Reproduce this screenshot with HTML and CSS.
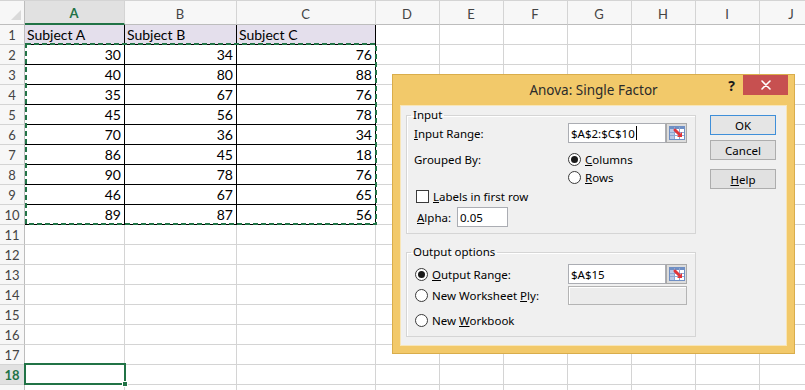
FILE: index.html
```html
<!DOCTYPE html>
<html lang="en">
  <head>
    <meta charset="UTF-8" />
    <meta name="viewport" content="width=device-width, initial-scale=1.0" />
    <title>Anova: Single Factor</title>
    <link rel="stylesheet" href="styles.css">
  </head>
  <body>
    <div class="workbook">
      <div class="grid">
        <div class="cell corner"></div>
        <div class="cell col-head active">A</div><div class="cell col-head">B</div><div class="cell col-head">C</div><div class="cell col-head">D</div><div class="cell col-head">E</div><div class="cell col-head">F</div><div class="cell col-head">G</div><div class="cell col-head">H</div><div class="cell col-head">I</div><div class="cell col-head">J</div>

        <div class="cell row-head">1</div>
        <div class="cell boxed title-row">Subject A</div><div class="cell boxed title-row">Subject B</div><div class="cell boxed title-row">Subject C</div>
        <div class="cell"></div><div class="cell"></div><div class="cell"></div><div class="cell"></div><div class="cell"></div><div class="cell"></div><div class="cell"></div>

        <div class="cell row-head">2</div>
        <div class="cell boxed num">30</div><div class="cell boxed num">34</div><div class="cell boxed num">76</div>
        <div class="cell"></div><div class="cell"></div><div class="cell"></div><div class="cell"></div><div class="cell"></div><div class="cell"></div><div class="cell"></div>

        <div class="cell row-head">3</div>
        <div class="cell boxed num">40</div><div class="cell boxed num">80</div><div class="cell boxed num">88</div>
        <div class="cell"></div><div class="cell"></div><div class="cell"></div><div class="cell"></div><div class="cell"></div><div class="cell"></div><div class="cell"></div>

        <div class="cell row-head">4</div>
        <div class="cell boxed num">35</div><div class="cell boxed num">67</div><div class="cell boxed num">76</div>
        <div class="cell"></div><div class="cell"></div><div class="cell"></div><div class="cell"></div><div class="cell"></div><div class="cell"></div><div class="cell"></div>

        <div class="cell row-head">5</div>
        <div class="cell boxed num">45</div><div class="cell boxed num">56</div><div class="cell boxed num">78</div>
        <div class="cell"></div><div class="cell"></div><div class="cell"></div><div class="cell"></div><div class="cell"></div><div class="cell"></div><div class="cell"></div>

        <div class="cell row-head">6</div>
        <div class="cell boxed num">70</div><div class="cell boxed num">36</div><div class="cell boxed num">34</div>
        <div class="cell"></div><div class="cell"></div><div class="cell"></div><div class="cell"></div><div class="cell"></div><div class="cell"></div><div class="cell"></div>

        <div class="cell row-head">7</div>
        <div class="cell boxed num">86</div><div class="cell boxed num">45</div><div class="cell boxed num">18</div>
        <div class="cell"></div><div class="cell"></div><div class="cell"></div><div class="cell"></div><div class="cell"></div><div class="cell"></div><div class="cell"></div>

        <div class="cell row-head">8</div>
        <div class="cell boxed num">90</div><div class="cell boxed num">78</div><div class="cell boxed num">76</div>
        <div class="cell"></div><div class="cell"></div><div class="cell"></div><div class="cell"></div><div class="cell"></div><div class="cell"></div><div class="cell"></div>

        <div class="cell row-head">9</div>
        <div class="cell boxed num">46</div><div class="cell boxed num">67</div><div class="cell boxed num">65</div>
        <div class="cell"></div><div class="cell"></div><div class="cell"></div><div class="cell"></div><div class="cell"></div><div class="cell"></div><div class="cell"></div>

        <div class="cell row-head">10</div>
        <div class="cell boxed num">89</div><div class="cell boxed num">87</div><div class="cell boxed num">56</div>
        <div class="cell"></div><div class="cell"></div><div class="cell"></div><div class="cell"></div><div class="cell"></div><div class="cell"></div><div class="cell"></div>

        <div class="cell row-head">11</div>
        <div class="cell"></div><div class="cell"></div><div class="cell"></div><div class="cell"></div><div class="cell"></div><div class="cell"></div><div class="cell"></div><div class="cell"></div><div class="cell"></div><div class="cell"></div>

        <div class="cell row-head">12</div>
        <div class="cell"></div><div class="cell"></div><div class="cell"></div><div class="cell"></div><div class="cell"></div><div class="cell"></div><div class="cell"></div><div class="cell"></div><div class="cell"></div><div class="cell"></div>

        <div class="cell row-head">13</div>
        <div class="cell"></div><div class="cell"></div><div class="cell"></div><div class="cell"></div><div class="cell"></div><div class="cell"></div><div class="cell"></div><div class="cell"></div><div class="cell"></div><div class="cell"></div>

        <div class="cell row-head">14</div>
        <div class="cell"></div><div class="cell"></div><div class="cell"></div><div class="cell"></div><div class="cell"></div><div class="cell"></div><div class="cell"></div><div class="cell"></div><div class="cell"></div><div class="cell"></div>

        <div class="cell row-head">15</div>
        <div class="cell"></div><div class="cell"></div><div class="cell"></div><div class="cell"></div><div class="cell"></div><div class="cell"></div><div class="cell"></div><div class="cell"></div><div class="cell"></div><div class="cell"></div>

        <div class="cell row-head">16</div>
        <div class="cell"></div><div class="cell"></div><div class="cell"></div><div class="cell"></div><div class="cell"></div><div class="cell"></div><div class="cell"></div><div class="cell"></div><div class="cell"></div><div class="cell"></div>

        <div class="cell row-head">17</div>
        <div class="cell"></div><div class="cell"></div><div class="cell"></div><div class="cell"></div><div class="cell"></div><div class="cell"></div><div class="cell"></div><div class="cell"></div><div class="cell"></div><div class="cell"></div>

        <div class="cell row-head active">18</div>
        <div class="cell"></div><div class="cell"></div><div class="cell"></div><div class="cell"></div><div class="cell"></div><div class="cell"></div><div class="cell"></div><div class="cell"></div><div class="cell"></div><div class="cell"></div>

        <div class="cell row-head"></div>
        <div class="cell"></div><div class="cell"></div><div class="cell"></div><div class="cell"></div><div class="cell"></div><div class="cell"></div><div class="cell"></div><div class="cell"></div><div class="cell"></div><div class="cell"></div>
      </div>

      <!-- copy marquee round A2:C10 -->
      <svg class="marquee" width="352" height="182" viewBox="0 0 352 182">
        <rect x="1" y="1" width="350" height="180" fill="none" stroke="#217346" stroke-width="2" stroke-dasharray="5 3" />
      </svg>

      <!-- active cell A18 -->
      <div class="selection"><span class="fill-handle"></span></div>

      <div class="dialog">
        <div class="titlebar">
          <span></span>
          <span class="title">Anova: Single Factor</span>
          <div class="window-controls">
            <span class="help-mark">?</span>
            <span class="close-button">
              <svg width="10" height="10" viewBox="0 0 10 10">
                <path d="M1 1L9 9M9 1L1 9" stroke="#ffffff" stroke-width="1.6" stroke-linecap="round" />
              </svg>
            </span>
          </div>
        </div>

        <div class="dialog-body">
          <div class="groups">
            <fieldset class="group group-input">
              <legend>Input</legend>
              <div class="row row-range">
                <span class="label"><u>I</u>nput Range:</span>
                <span class="field field-range">$A$2:$C$10<span class="caret"></span></span>
                <span class="ref-button">
                  <svg width="16" height="14" viewBox="0 0 16 14">
                    <rect x="0.5" y="0.5" width="15" height="13" fill="#ffffff" stroke="#6f8fc4" />
                    <rect x="1" y="1" width="4" height="12" fill="#b9c9e6" />
                    <rect x="1" y="1" width="14" height="2" fill="#6f8fc4" />
                    <path d="M1 6.5H15M1 9.5H15M5.5 1V13M10.5 1V13" stroke="#8fa7d2" stroke-width="1" />
                    <path d="M6 4L10 8" stroke="#e0353a" stroke-width="3" stroke-linecap="round" />
                    <path d="M8 11L13 11L13 6Z" fill="#e0353a" />
                  </svg>
                </span>
              </div>
              <div class="row row-grouped">
                <span class="label">Grouped By:</span>
                <span class="option"><span class="radio checked"></span><span><u>C</u>olumns</span></span>
              </div>
              <div class="row row-rows">
                <span class="label"></span>
                <span class="option"><span class="radio"></span><span><u>R</u>ows</span></span>
              </div>
              <div class="row row-labels">
                <span class="option"><span class="checkbox"></span><span><u>L</u>abels in first row</span></span>
              </div>
              <div class="row row-alpha">
                <span class="label label-alpha"><u>A</u>lpha:</span>
                <span class="field field-alpha">0.05</span>
              </div>
            </fieldset>

            <fieldset class="group group-output">
              <legend>Output options</legend>
              <div class="row row-output">
                <span class="label option"><span class="radio checked"></span><span><u>O</u>utput Range:</span></span>
                <span class="field field-range">$A$15</span>
                <span class="ref-button">
                  <svg width="16" height="14" viewBox="0 0 16 14">
                    <rect x="0.5" y="0.5" width="15" height="13" fill="#ffffff" stroke="#6f8fc4" />
                    <rect x="1" y="1" width="4" height="12" fill="#b9c9e6" />
                    <rect x="1" y="1" width="14" height="2" fill="#6f8fc4" />
                    <path d="M1 6.5H15M1 9.5H15M5.5 1V13M10.5 1V13" stroke="#8fa7d2" stroke-width="1" />
                    <path d="M6 4L10 8" stroke="#e0353a" stroke-width="3" stroke-linecap="round" />
                    <path d="M8 11L13 11L13 6Z" fill="#e0353a" />
                  </svg>
                </span>
              </div>
              <div class="row row-ply">
                <span class="label option"><span class="radio"></span><span>New Worksheet <u>P</u>ly:</span></span>
                <span class="field field-disabled"></span>
              </div>
              <div class="row row-workbook">
                <span class="label option"><span class="radio"></span><span>New <u>W</u>orkbook</span></span>
              </div>
            </fieldset>
          </div>

          <div class="buttons">
            <button class="btn btn-default">OK</button>
            <button class="btn btn-cancel">Cancel</button>
            <button class="btn btn-help"><u>H</u>elp</button>
          </div>
        </div>
      </div>
    </div>
  </body>
</html>
```

FILE: styles.css
```css
* {
  box-sizing: border-box;
}

body {
  margin: 0;
  background: #ffffff;
  overflow: hidden;
}

.workbook {
  position: relative;
  width: 805px;
  height: 390px;
  overflow: hidden;
  font-family: Lato, "Liberation Sans", sans-serif;
}

/* sheet */
.grid {
  display: grid;
  grid-template-columns: 25px 100px 112px 139px repeat(7, 64px);
  grid-template-rows: 24px repeat(19, 20px);
  border-top: 1px solid #d4d4d4;
}

.cell {
  border-right: 1px solid #d4d4d4;
  border-bottom: 1px solid #d4d4d4;
  padding: 0 3px 0 2px;
  font-size: 14px;
  line-height: 19px;
  color: #000;
  white-space: nowrap;
  overflow: hidden;
}

.corner {
  position: relative;
  background: #f7f7f7;
  border-bottom-color: #bdbdbd;
  border-right-color: #bdbdbd;
}

.corner::after {
  content: "";
  position: absolute;
  right: 3px;
  bottom: 4px;
  border-left: 10px solid transparent;
  border-bottom: 10px solid #dadada;
}

.col-head {
  background: #f7f7f7;
  border-bottom-color: #bdbdbd;
  color: #444;
  font-size: 13px;
  line-height: 26px;
  text-align: center;
}

.col-head.active {
  background: #e1e1e1;
  border-bottom: 2px solid #217346;
  color: #217346;
  font-weight: bold;
  line-height: 25px;
}

.row-head {
  background: #f7f7f7;
  border-right-color: #bdbdbd;
  color: #444;
  font-size: 13px;
  line-height: 20px;
  text-align: center;
  padding: 0;
}

.row-head.active {
  background: #e1e1e1;
  color: #217346;
  font-weight: bold;
}

.boxed {
  border-right-color: #000;
  border-bottom-color: #000;
}

.title-row {
  background: #e4dfec;
}

.num {
  text-align: right;
}

.marquee {
  position: absolute;
  left: 25px;
  top: 43px;
}

.selection {
  position: absolute;
  left: 24px;
  top: 363px;
  width: 102px;
  height: 22px;
  border: 2px solid #217346;
}

.fill-handle {
  position: absolute;
  right: -4px;
  bottom: -4px;
  width: 6px;
  height: 6px;
  background: #217346;
  border: 1px solid #ffffff;
}

/* dialog */
.dialog {
  position: absolute;
  left: 392px;
  top: 74px;
  width: 403px;
  height: 280px;
  display: flex;
  flex-direction: column;
  padding: 0 7px 7px;
  background: #f2c96a;
  border: 1px solid #d9ad4b;
  font-family: "Segoe UI", "Noto Sans", sans-serif;
  font-size: 11.5px;
  color: #000;
}

.titlebar {
  height: 30px;
  display: grid;
  grid-template-columns: 1fr auto 1fr;
}

.title {
  font-size: 13.5px;
  line-height: 31px;
  color: #2b2b2b;
}

.window-controls {
  display: flex;
  justify-content: flex-end;
  align-items: flex-start;
  margin-right: -1px;
}

.help-mark {
  margin-top: 3px;
  margin-right: 8px;
  font-size: 14px;
  font-weight: bold;
  line-height: 16px;
  color: #1a1a1a;
}

.close-button {
  width: 45px;
  height: 20px;
  display: flex;
  align-items: center;
  justify-content: center;
  background: #c75050;
}

.dialog-body {
  flex: 1;
  display: flex;
  padding: 1px 0 0 5px;
  background: #f0f0f0;
  border: 1px solid #f8e6b8;
}

.groups {
  width: 290px;
}

.group {
  margin: 0;
  min-inline-size: 0;
  padding: 0 0 6px 7px;
  border: 1px solid #d5d5d5;
  box-shadow: inset 1px 1px #ffffff;
}

.group legend {
  margin-left: -3px;
  padding: 0 2px;
  line-height: 16px;
}

.group-output {
  margin-top: 10px;
}

.row {
  display: flex;
  align-items: center;
  height: 20px;
}

.label {
  width: 154px;
  flex-shrink: 0;
}

.option {
  display: flex;
  align-items: center;
  gap: 4px;
}

.row-grouped {
  margin-top: 7px;
  height: 18px;
}

.row-rows {
  height: 18px;
}

.row-labels {
  margin-top: 1px;
  height: 18px;
  padding-left: 2px;
}

.row-alpha {
  margin-top: 2px;
}

.label-alpha {
  width: 43px;
  padding-left: 3px;
}

.row-output {
  margin-top: 4px;
}

.row-output .option,
.row-ply .option,
.row-workbook .option {
  padding-left: 1px;
}

.row-ply {
  margin-top: 1px;
}

.row-workbook {
  margin-top: 5px;
}

.radio {
  position: relative;
  width: 13px;
  height: 13px;
  flex-shrink: 0;
  border: 1px solid #3a3a3a;
  border-radius: 50%;
  background: #ffffff;
}

.radio.checked::after {
  content: "";
  position: absolute;
  left: 2px;
  top: 2px;
  width: 7px;
  height: 7px;
  border-radius: 50%;
  background: #1a1a1a;
}

.checkbox {
  width: 13px;
  height: 13px;
  flex-shrink: 0;
  border: 1px solid #3a3a3a;
  background: #ffffff;
}

.field {
  display: flex;
  align-items: center;
  height: 20px;
  padding-left: 2px;
  border: 1px solid #abadb3;
  background: #ffffff;
}

.field-range {
  width: 98px;
}

.field-alpha {
  width: 51px;
}

.field-disabled {
  width: 119px;
  height: 19px;
  background: #ececec;
  border-color: #b4b4b4;
  box-shadow: inset 0 1px #ffffff, inset 1px 0 #ffffff;
}

.caret {
  width: 1px;
  height: 14px;
  margin-left: 1px;
  background: #000;
}

.ref-button {
  width: 21px;
  height: 20px;
  display: flex;
  align-items: center;
  justify-content: center;
  background: #dcdcdc;
  border: 1px solid #a9a9a9;
}

.buttons {
  display: flex;
  flex-direction: column;
  margin: 8px 0 0 14px;
}

.btn {
  width: 66px;
  height: 20px;
  padding: 0;
  font-family: inherit;
  font-size: 11.5px;
  color: #000;
  background: #e1e1e1;
  border: 1px solid #adadad;
}

.btn-default {
  border-color: #3f8fd9;
  background: #e5e5e5;
}

.btn-cancel {
  margin-top: 5px;
}

.btn-help {
  margin-top: 9px;
}
```
